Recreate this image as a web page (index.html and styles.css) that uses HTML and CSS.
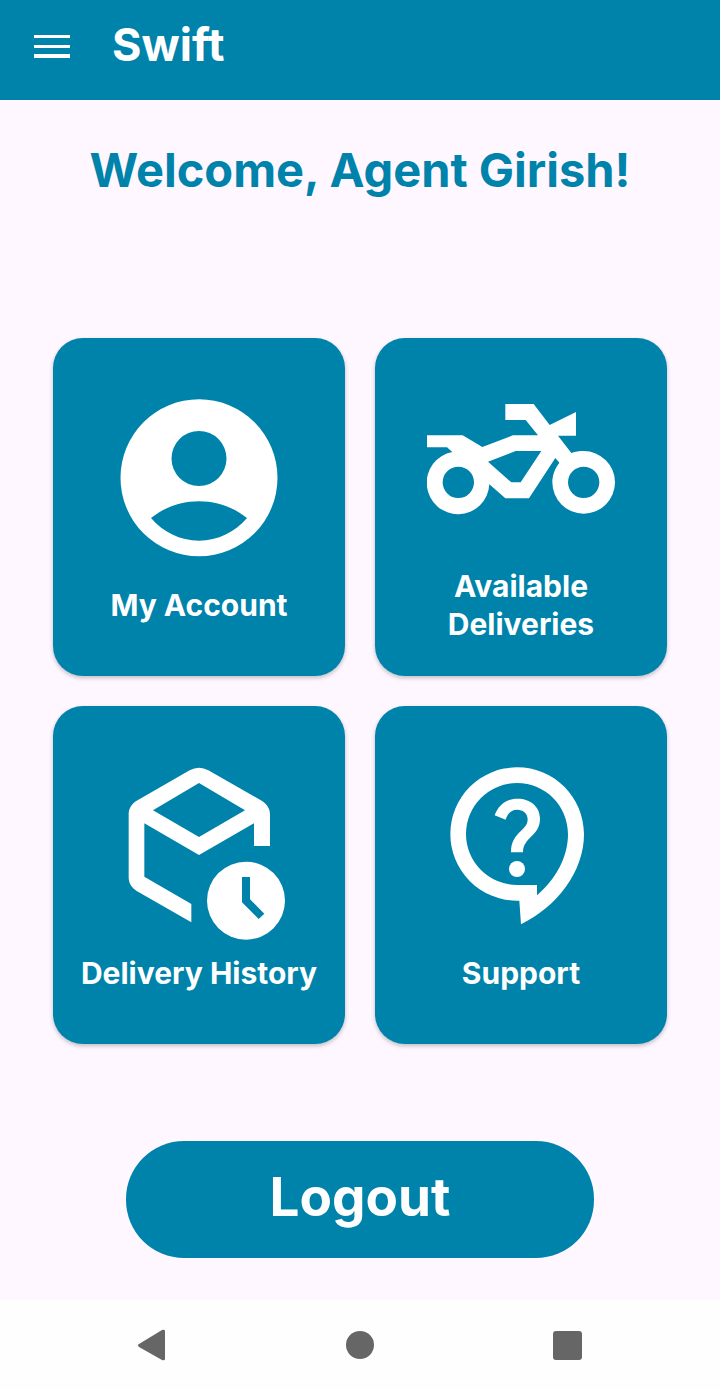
FILE: index.html
```html
<!DOCTYPE html>
<html lang="en">
<head>
<meta charset="utf-8">
<meta name="viewport" content="width=device-width, initial-scale=1">
<title>Swift</title>
<link rel="stylesheet" href="styles.css">
</head>
<body>
<header class="app-bar">
  <button class="menu-button" type="button" aria-label="Open menu">
    <svg class="menu-icon" viewBox="0 0 36 24" aria-hidden="true"><path d="M0 1h36v3H0zM0 11h36v3H0zM0 20h36v4H0z"/></svg>
  </button>
  <span class="app-title">Swift</span>
</header>

<main class="content">
  <h1 class="welcome">Welcome, Agent Girish!</h1>

  <nav class="tiles" aria-label="Dashboard">
    <button class="tile" type="button">
      <svg class="tile-icon" viewBox="180 162 564 564" aria-hidden="true"><path fill-rule="evenodd" d="M462 208a235.500 235.500 0 1 0 0 471a235.500 235.500 0 1 0 0-471zM462 303a82.500 82.500 0 1 1 0 165a82.500 82.500 0 1 1 0-165zM318 564C357 533 407 514 462 514S567 533 606 564C570 606 519 632 462 632S354 606 318 564z"/></svg>
      <span class="tile-label">My Account</span>
    </button>
    <button class="tile" type="button">
      <svg class="tile-icon" viewBox="186 162 564 564" aria-hidden="true"><path fill-rule="evenodd" d="M421 222H506L554 285L633 246V317H579L619 369C631 365 643 363 656 363A94 94 0 1 1 562 457C562 436 570 415 583 398L571 384L492 505H421L373 463A94 94 0 1 1 262 366L246 352H186V316H293L352 351L444 316H519L482 270H421zM452 363L369 395L439 457H467L529 363zM280 410a47 47 0 1 0 0 94a47 47 0 1 0 0-94zM656 410a47 47 0 1 0 0 94a47 47 0 1 0 0-94z"/></svg>
      <span class="tile-label">Available Deliveries</span>
    </button>
    <button class="tile" type="button">
      <svg class="tile-icon" viewBox="180 156 564 564" aria-hidden="true"><path fill-rule="evenodd" d="M251 343C251 326 259 312 275 302L434 211Q462 196 490 211L650 302C666 312 675 326 675 343V438H627V370L462 465L298 370V530L439 612V667L275 573C259 563 251 549 251 532zM462 249L324 331L462 411L600 331zM603 485a117 117 0 1 1 0 234a117 117 0 1 1 0-234zM591 531V607L641 657L658 641L615 598V531z"/></svg>
      <span class="tile-label">Delivery History</span>
    </button>
    <button class="tile" type="button">
      <svg class="tile-icon" viewBox="186 156 564 564" aria-hidden="true"><path fill-rule="evenodd" d="M456 202C567 202 657 291 657 403C657 516 574 622 468 673L463 602H456A200 200 0 0 1 456 202zM456 249A153 153 0 0 0 456 555H516V586C572 538 609 472 609 403C609 317 541 249 456 249z"/><path d="M389 346C400 315 425 296 457 296C497 296 525 320 525 356C525 408 474 411 474 457H438C438 396 488 393 488 358C488 341 475 329 456 329C440 329 427 340 422 359z"/><circle cx="456" cy="507" r="24"/></svg>
      <span class="tile-label">Support</span>
    </button>
  </nav>

  <button class="logout" type="button">Logout</button>
</main>

<footer class="system-bar">
  <button class="system-button" type="button" aria-label="Back">
    <svg class="system-icon" viewBox="0 0 32 32" aria-hidden="true"><path d="M3 15L26 1Q29 0 29 2V30Q29 32 26 31L3 18Q1 16 3 15z"/></svg>
  </button>
  <button class="system-button" type="button" aria-label="Home">
    <svg class="system-icon" viewBox="0 0 32 32" aria-hidden="true"><circle cx="16" cy="16" r="14"/></svg>
  </button>
  <button class="system-button" type="button" aria-label="Recent apps">
    <svg class="system-icon" viewBox="0 0 32 32" aria-hidden="true"><rect x="1" y="2" width="29" height="29" rx="3"/></svg>
  </button>
</footer>
</body>
</html>
```
FILE: styles.css
```css
:root {
  --brand: #0083ab;
  --surface: #fef7ff;
  --on-brand: #ffffff;
}

* {
  box-sizing: border-box;
}

body {
  margin: 0;
  min-height: 100vh;
  display: flex;
  flex-direction: column;
  background: var(--surface);
  font-family: Inter, "Liberation Sans", sans-serif;
}

button {
  margin: 0;
  padding: 0;
  border: 0;
  background: none;
  font: inherit;
  color: inherit;
  cursor: pointer;
}

svg {
  display: block;
  fill: currentColor;
}

.app-bar {
  display: flex;
  align-items: center;
  gap: 32px;
  padding: 15px 24px 25px;
  background: var(--brand);
  color: var(--on-brand);
}

.menu-button {
  padding: 12px 10px 10px;
}

.menu-icon {
  width: 36px;
  height: 24px;
}

.app-title {
  font-size: 45px;
  line-height: 60px;
  font-weight: 700;
}

.content {
  flex: 1;
  display: flex;
  flex-direction: column;
  padding-top: 40px;
}

.welcome {
  margin: 0 0 138px;
  text-align: center;
  font-size: 47px;
  line-height: 60px;
  font-weight: 700;
  color: var(--brand);
}

.tiles {
  display: grid;
  grid-template-columns: 1fr 1fr;
  gap: 30px;
  padding: 0 53px;
}

.tile {
  display: flex;
  flex-direction: column;
  align-items: center;
  min-height: 338px;
  padding: 46px 20px 33px;
  border-radius: 30px;
  background: var(--brand);
  color: var(--on-brand);
  box-shadow: 0 2px 4px rgba(0, 0, 0, 0.24);
}

.tile-icon {
  flex: none;
  width: 188px;
  height: 188px;
}

.tile-label {
  display: flex;
  align-items: center;
  min-height: 76px;
  margin-top: -5px;
  font-size: 30px;
  line-height: 38px;
  font-weight: 700;
}

.logout {
  align-self: center;
  width: 65%;
  margin: 97px 0 42px;
  padding: 24px 24px 29px;
  border-radius: 58px;
  background: var(--brand);
  color: var(--on-brand);
  font-size: 53px;
  line-height: 64px;
  font-weight: 700;
}

.system-bar {
  display: flex;
  justify-content: center;
  gap: 176px;
  padding: 29px 0;
  background: #fefefe;
  color: #666666;
}

.system-icon {
  width: 32px;
  height: 32px;
}
```
